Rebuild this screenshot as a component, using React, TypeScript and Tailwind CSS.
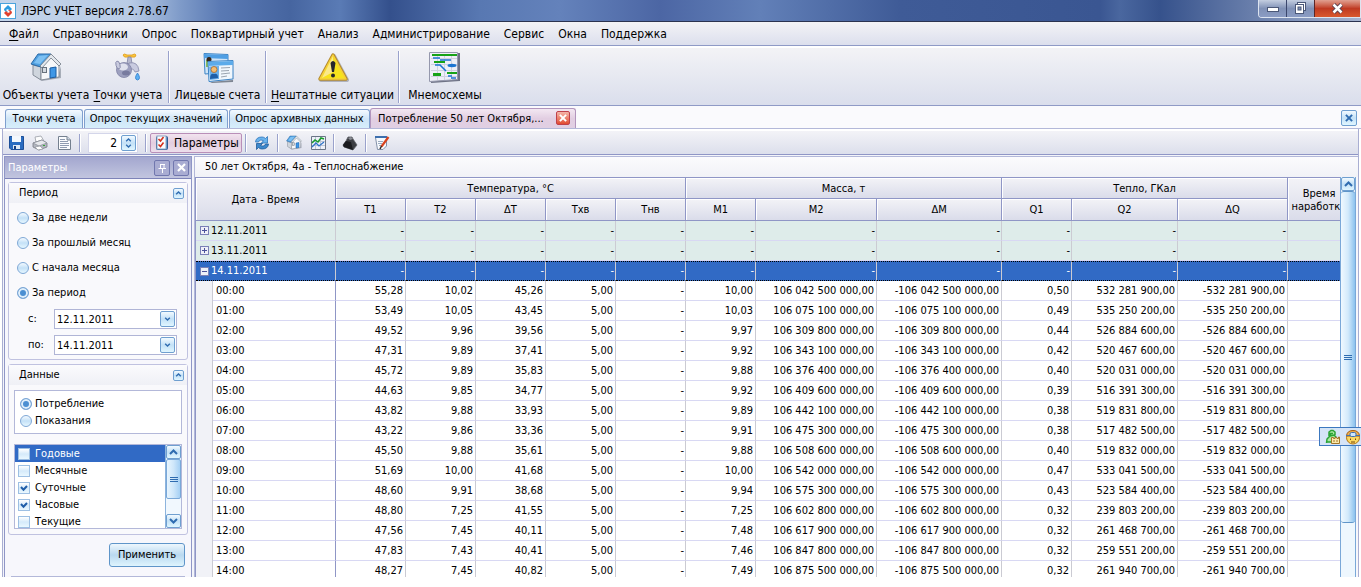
import React, { useState } from "react";

type Hour = [string, string, string, string, string, string, string, string];

const hours: Hour[] = [
  ["00:00", "55,28", "10,02", "45,26", "10,00", "106 042 500 000,00", "0,50", "532 281 900,00"],
  ["01:00", "53,49", "10,05", "43,45", "10,03", "106 075 100 000,00", "0,49", "535 250 200,00"],
  ["02:00", "49,52", "9,96", "39,56", "9,97", "106 309 800 000,00", "0,44", "526 884 600,00"],
  ["03:00", "47,31", "9,89", "37,41", "9,92", "106 343 100 000,00", "0,42", "520 467 600,00"],
  ["04:00", "45,72", "9,89", "35,83", "9,88", "106 376 400 000,00", "0,40", "520 031 000,00"],
  ["05:00", "44,63", "9,85", "34,77", "9,92", "106 409 600 000,00", "0,39", "516 391 300,00"],
  ["06:00", "43,82", "9,88", "33,93", "9,89", "106 442 100 000,00", "0,38", "519 831 800,00"],
  ["07:00", "43,22", "9,86", "33,36", "9,91", "106 475 300 000,00", "0,38", "517 482 500,00"],
  ["08:00", "45,50", "9,88", "35,61", "9,88", "106 508 600 000,00", "0,40", "519 832 000,00"],
  ["09:00", "51,69", "10,00", "41,68", "10,00", "106 542 000 000,00", "0,47", "533 041 500,00"],
  ["10:00", "48,60", "9,91", "38,68", "9,94", "106 575 300 000,00", "0,43", "523 584 400,00"],
  ["11:00", "48,80", "7,25", "41,55", "7,25", "106 602 800 000,00", "0,32", "239 803 200,00"],
  ["12:00", "47,56", "7,45", "40,11", "7,48", "106 617 900 000,00", "0,32", "261 468 700,00"],
  ["13:00", "47,83", "7,43", "40,41", "7,46", "106 847 800 000,00", "0,32", "259 551 200,00"],
  ["14:00", "48,27", "7,45", "40,82", "7,49", "106 875 500 000,00", "0,32", "261 940 700,00"],
];

const menu = ["Файл", "Справочники", "Опрос", "Поквартирный учет", "Анализ", "Администрирование", "Сервис", "Окна", "Поддержка"];

const BLUE_BTN = "border border-[#6f9fd0] rounded-[2px] bg-linear-to-b from-[#f2faff] via-[#c3e1f7] to-[#e0f6ff]";

function Chevron({ up = false, small = false }: { up?: boolean; small?: boolean }) {
  return (
    <svg width={small ? 7 : 9} height={small ? 4 : 6} viewBox="0 0 9 6" className={up ? "rotate-180" : ""} aria-hidden="true">
      <path d="M1 1 L4.500 4.500 L8 1" fill="none" stroke="#2f6cb0" strokeWidth="2" />
    </svg>
  );
}

function Cross({ color, size = 9 }: { color: string; size?: number }) {
  return (
    <svg width={size} height={size} viewBox="0 0 9 9" aria-hidden="true">
      <path d="M1 1 L8 8 M8 1 L1 8" stroke={color} strokeWidth="2.200" />
    </svg>
  );
}

function HouseIcon({ size }: { size: number }) {
  return (
    <svg width={size} height={size} viewBox="0 0 32 32" aria-hidden="true">
      <path d="M4 23 L12 29 L31 26 L31 14 L28 24 Z" fill="#7d8592" opacity=".6" />
      <path d="M3 13 L11 15 L11 28 L3 23 Z" fill="#cfd5dd" stroke="#858d99" />
      <path d="M11 14 L21 4 L29 12 V25 L11 28 Z" fill="#f7f8fa" stroke="#858d99" />
      <path d="M1 12 L8 2 L21 2 L11 15 Z" fill="#4f9fe0" stroke="#2a69a6" strokeLinejoin="round" />
      <path d="M4 11 L9 4 L18 3 L10 12 Z" fill="#7dc0f2" />
      <path d="M21 2 L31 12 L29 14 L21 6 L12 16 L10 14 Z" fill="#e3e7ec" stroke="#6f7884" strokeWidth=".8" />
      <path d="M20 16 L26 15 V25 L20 26 Z" fill="#3f97e6" stroke="#1b5ca2" />
      <rect x="12.500" y="15.500" width="4" height="5" fill="#d4dae1" stroke="#69727d" />
    </svg>
  );
}

function FaucetIcon() {
  return (
    <svg width="32" height="32" viewBox="0 0 32 32" aria-hidden="true">
      <path d="M11 3 Q12 1 15 3 H20 Q23 1 24 3 Q24 6 20 5 H15 Q12 6 11 3 Z" fill="#fbc63e" stroke="#dd9b1c" strokeWidth=".8" />
      <path d="M16 5 L19 5 L20 12 L15 12 Z" fill="#b7b9cf" stroke="#8184a3" strokeWidth=".8" />
      <path d="M17 11 Q26 9 27 19 L23 20 Q22 16 16 17 Z" fill="#c9cbe0" stroke="#8689aa" strokeWidth=".8" />
      <circle cx="12" cy="18" r="7.500" fill="#9da0bf" stroke="#7f82a4" strokeWidth=".8" />
      <ellipse cx="11" cy="15" rx="5" ry="3.500" fill="#dfe1ed" />
      <ellipse cx="14" cy="21" rx="4" ry="2.500" fill="#787b9f" />
      <ellipse cx="6" cy="13" rx="2" ry="4" fill="#c9cbdf" stroke="#7f82a4" strokeWidth=".8" transform="rotate(-15 6 13)" />
      <path d="M25.500 21 Q21.500 27 25.500 28 Q29.500 27 25.500 21 Z" fill="#5fb0f2" stroke="#2c7ccd" strokeWidth=".8" />
    </svg>
  );
}

function CardsIcon() {
  return (
    <svg width="32" height="32" viewBox="0 0 32 32" aria-hidden="true">
      <path d="M2 1.500 L26 2.500 V20 L3 22 Z" fill="#cfe4f7" stroke="#3c84c6" strokeLinejoin="round" />
      <path d="M2 2 L26 3 V7 L2 6 Z" fill="#4f9fe4" />
      <path d="M4 8 H9 V15 H4 Z" fill="#86bb5e" />
      <circle cx="7" cy="7.500" r="2.500" fill="#35261c" />
      <path d="M8 30 L31 28 L32 12 L31 30 L10 31 Z" fill="#7d8592" />
      <path d="M6 9.500 L31 8.500 V27 L7 29.500 Z" fill="#f1f7fd" stroke="#3c84c6" strokeLinejoin="round" />
      <path d="M6 10 L31 9 V13 L6 14 Z" fill="#5cabea" />
      <path d="M7 14.500 L17 14 V27 L8 28 Z" fill="#6bb0ea" />
      <circle cx="12" cy="17.500" r="3" fill="#f4bd72" stroke="#a9682a" strokeWidth=".8" />
      <path d="M8 27 Q8 21 12 22 Q16 21 16 26 Z" fill="#1f5fa8" />
      <path d="M19 16 L28 15.500 M19 19 L27 18.500 M19 22 L28 21 M19 25 L25 24" stroke="#9aa4b0" />
    </svg>
  );
}

function WarningIcon() {
  return (
    <svg width="32" height="32" viewBox="0 0 32 32" aria-hidden="true">
      <path d="M17 4 L30 28 H4 Z" fill="#7b7f8d" stroke="#7b7f8d" strokeWidth="4" strokeLinejoin="round" opacity=".5" />
      <path d="M16 3 L29 27 H3 Z" fill="#f7e21c" stroke="#b58a2c" strokeWidth="3.500" strokeLinejoin="round" />
      <path d="M16 3 L29 27 H3 Z" fill="#f7e21c" stroke="#f5cf3a" strokeWidth="1.500" strokeLinejoin="round" />
      <path d="M16 4 L16 20 L5 26 Z" fill="#fbe98a" />
      <path d="M13.500 11 Q16 7 18.500 11 L17 20 H15 Z" fill="#26262c" />
      <circle cx="16" cy="23.500" r="2" fill="#26262c" />
    </svg>
  );
}

function SchemeIcon() {
  return (
    <svg width="32" height="32" viewBox="0 0 32 32" aria-hidden="true">
      <path d="M2 1 L31 1 L31 29 L2 31 Z" fill="#6f7386" />
      <path d="M.5 .5 L28.500 .5 L28.500 27.500 L.5 29.500 Z" fill="#eeeff7" stroke="#9598ad" />
      <path d="M8.500 3 V28 M15.500 3 V28 M22.500 3 V28 M2 6.500 H28 M2 12.500 H28 M2 18.500 H28 M2 24.500 H28" stroke="#cfd1df" />
      <path d="M3 3 H28" stroke="#17a317" strokeWidth="2" />
      <path d="M5 10 H16 M18 21 H28" stroke="#17a317" strokeWidth="2" />
      <rect x="4" y="21" width="8" height="3" fill="#17a317" />
      <path d="M4 6 H11 M11 8 H22 M6 13 H11 L17 19 M19 24 H23 M22 26 H27" stroke="#1c74d2" strokeWidth="1.500" fill="none" />
      <ellipse cx="23" cy="13.500" rx="4.500" ry="1.700" fill="#1c74d2" />
    </svg>
  );
}

function SaveIcon() {
  return (
    <svg width="16" height="16" viewBox="0 0 16 16" aria-hidden="true">
      <path d="M1.500 1.500 H15.500 V14.500 H3 L1.500 13 Z" fill="#2a6cc0" stroke="#1d4f98" />
      <rect x="4" y="1" width="9" height="6" fill="#f4f8fd" />
      <rect x="5" y="10" width="7" height="4" fill="#dfe9f5" />
      <rect x="6" y="11" width="2" height="3" fill="#173f80" />
    </svg>
  );
}

function PrintIcon() {
  return (
    <svg width="16" height="16" viewBox="0 0 16 16" aria-hidden="true">
      <path d="M4 7 L3 2 L9 1 L12 6 Z" fill="#fdfdfd" stroke="#9a9ea6" strokeWidth=".8" />
      <path d="M1 8 L10 5 L15 8 V12 L7 15 L1 12 Z" fill="#b3b7c0" stroke="#767a83" strokeWidth=".8" />
      <path d="M1 8 L7 11 L15 8 L10 5 Z" fill="#e6e8ec" stroke="#8d919a" strokeWidth=".8" />
      <path d="M3 12 L8 11 L11 14 L6 15 Z" fill="#fff" stroke="#9a9ea6" strokeWidth=".8" />
      <rect x="11" y="10" width="2" height="1" fill="#37a637" />
    </svg>
  );
}

function PageIcon() {
  return (
    <svg width="16" height="16" viewBox="0 0 16 16" aria-hidden="true">
      <path d="M2.500 1.500 H11 L14.500 5 V14.500 H2.500 Z" fill="#fbfcfe" stroke="#74808f" />
      <path d="M11 1.500 V5 H14.500" fill="#cfd8e4" stroke="#74808f" />
      <path d="M4 6.500 H12 M4 8.500 H13 M4 10.500 H13 M4 12.500 H11 M4 4.500 H9" stroke="#8f9bb0" />
    </svg>
  );
}

function ChecklistIcon() {
  return (
    <svg width="16" height="16" viewBox="0 0 16 16" aria-hidden="true">
      <rect x="2.500" y="1.500" width="11" height="13" rx="1" fill="#4b84c4" stroke="#2c5a91" />
      <rect x="3" y="1" width="9" height="13" fill="#f8fbff" stroke="#8aa6c6" />
      <path d="M4.500 4 L6.500 6 L9.500 2 M4.500 9.500 L6.500 11.500 L9.500 7.500" stroke="#d4311d" strokeWidth="1.600" fill="none" />
    </svg>
  );
}

function RefreshIcon() {
  return (
    <svg width="16" height="16" viewBox="0 0 16 16" aria-hidden="true">
      <path d="M1.500 7 Q2 2 8 2 Q10 2 11.500 3.500 L13.500 1.500 V8 H7.500 L9.500 5.700 Q5.500 4 4.500 7 Z" fill="#6bb3ec" stroke="#2b74ba" strokeWidth=".8" />
      <path d="M14.500 9 Q14 14 8 14 Q6 14 4.500 12.500 L2.500 14.500 V8.500 H8.500 L6.500 10.500 Q10.500 12 11.500 9 Z" fill="#3c88cc" stroke="#1e5b9b" strokeWidth=".8" />
    </svg>
  );
}

function ChartIcon() {
  return (
    <svg width="16" height="16" viewBox="0 0 16 16" aria-hidden="true">
      <path d="M1.500 1.500 H15.500 V14.500 H1.500 Z" fill="#eef1f8" stroke="#6a7586" />
      <path d="M5.500 2 V14 M10.500 2 V14 M2 6.500 H15 M2 10.500 H15" stroke="#bcc5d5" />
      <path d="M2 8 L5 5 L8 7 L11 3 L14 4" stroke="#179c2c" strokeWidth="1.500" fill="none" />
      <path d="M2 12 L6 8 L9 11 L14 7" stroke="#2f74c8" strokeWidth="1.300" fill="none" />
    </svg>
  );
}

function WeightIcon() {
  return (
    <svg width="16" height="16" viewBox="0 0 16 16" aria-hidden="true">
      <path d="M4 6 L6 2 L10 2 L11 4 L15 10 L11 15 L2 12 L1 10 Z" fill="#3c3e43" stroke="#5c5f66" strokeWidth=".8" />
      <path d="M4 6 L9 7 L11 15 L2 12 L1 10 Z" fill="#1b1c20" />
      <path d="M6 3 L9 2 L11 4 L8 5 Z" fill="#8b8e95" />
    </svg>
  );
}

function NotepadIcon() {
  return (
    <svg width="16" height="16" viewBox="0 0 16 16" aria-hidden="true">
      <path d="M1.500 2.500 H12.500 V11 L9 14.500 H3.500 Z" fill="#f6f9fd" stroke="#8391a8" />
      <path d="M1 1 H13 V3 H1 Z" fill="#3c6fae" />
      <path d="M4 6.500 H9 M4 8.500 H8 M5 10.500 H8" stroke="#9cabc0" />
      <path d="M14.500 2 L7.500 11.500" stroke="#d8431f" strokeWidth="2.200" />
      <path d="M7.500 11 L6 14" stroke="#35261f" strokeWidth="1.500" />
    </svg>
  );
}

function BigButton({ icon, label, hot, width }: { icon: React.ReactNode; label: string; hot?: boolean; width: string }) {
  return (
    <button type="button" className={`flex h-full flex-col items-center gap-[3px] pt-1 whitespace-nowrap ${width}`}>
      {icon}
      <span className="text-[12px] leading-4">
        {hot ? <u className="underline-offset-2">{label[0]}</u> : label[0]}
        {label.slice(1)}
      </span>
    </button>
  );
}

function Sep({ tall = false }: { tall?: boolean }) {
  return <span className={`w-0.5 shrink-0 border-l border-[#9aa2cc] border-r border-r-white ${tall ? "mx-0.5 h-[52px]" : "mx-[3px] h-[18px]"}`} />;
}

function ToolBtn({ label, children }: { label: string; children: React.ReactNode }) {
  return (
    <button type="button" aria-label={label} className="flex size-6 shrink-0 items-center justify-center">
      {children}
    </button>
  );
}

function Radio({ name, label, checked, onChange }: { name: string; label: string; checked: boolean; onChange: () => void }) {
  return (
    <label className="flex items-center gap-[3px]">
      <input
        type="radio"
        name={name}
        checked={checked}
        onChange={onChange}
        className="size-3 appearance-none rounded-full border border-[#7fa8d6] bg-linear-to-b from-[#f4faff] via-[#c4e1f7] to-[#e6f7ff] checked:bg-none checked:bg-[#4b8fd2] checked:shadow-[inset_0_0_0_2px_#e0effb]"
      />
      {label}
    </label>
  );
}

function GroupBox({ title, children }: { title: string; children: React.ReactNode }) {
  return (
    <section className="rounded-[3px] border border-[#c0c2e0] bg-[#f9f9fc]">
      <header className="flex h-5 items-center justify-between bg-linear-to-b from-[#fbfbfd] to-[#eff0f6] pr-[3px] pl-2.5">
        <h2>{title}</h2>
        <button type="button" aria-label={`Свернуть: ${title}`} className={`flex size-[11px] items-center justify-center ${BLUE_BTN}`}>
          <Chevron up small />
        </button>
      </header>
      {children}
    </section>
  );
}

function DateField({ id, label, value }: { id: string; label: string; value: string }) {
  return (
    <div className="flex items-center">
      <label htmlFor={id} className="w-[26px]">{label}</label>
      <div className="flex h-5 w-[123px] items-center border border-[#b0b5d6] bg-white pr-px">
        <input id={id} defaultValue={value} className="h-full w-0 flex-1 bg-transparent pl-0.5 outline-none" />
        <button type="button" aria-label="Выбрать дату" className={`flex h-4 w-[15px] items-center justify-center ${BLUE_BTN}`}>
          <Chevron small />
        </button>
      </div>
    </div>
  );
}

function Sidebar() {
  const [period, setPeriod] = useState(3);
  const [mode, setMode] = useState(0);
  const [checks, setChecks] = useState([false, false, true, true, false]);
  return (
    <aside className="flex w-[188px] shrink-0 flex-col overflow-hidden border border-b-0 border-[#8f96c6] bg-[#f7f7fc]">
      <div className="flex h-[22px] shrink-0 items-center gap-[3px] border-b border-[#7d83b8] bg-linear-to-b from-[#a3a7cf] to-[#c2c5df] pr-0.5 pl-[3px] text-white">
        <h2 className="flex-1">Параметры</h2>
        <button type="button" aria-label="Закрепить" className="flex size-4 items-center justify-center rounded-[2px] border border-[#7177ae] bg-[#a9acd2]">
          <svg width="10" height="10" viewBox="0 0 10 10" aria-hidden="true">
            <path d="M3 1.500 H8 M3.500 1.500 V5 M7 1 V6 M1.500 5.500 H9 M5.500 6 V10" stroke="#fff" fill="none" />
          </svg>
        </button>
        <button type="button" aria-label="Закрыть панель" className="flex size-4 items-center justify-center rounded-[2px] border border-[#7177ae] bg-[#a9acd2]">
          <Cross color="#fff" size={9} />
        </button>
      </div>
      <div className="flex flex-col gap-1 px-[3px] pt-[3px]">
        <GroupBox title="Период">
          <div className="flex flex-col pl-2">
            {["За две недели", "За прошлый месяц", "С начала месяца", "За период"].map((t, i) => (
              <div key={t} className="flex h-[25px] items-center pt-1">
                <Radio name="period" label={t} checked={period === i} onChange={() => setPeriod(i)} />
              </div>
            ))}
          </div>
          <div className="flex flex-col gap-1.5 pt-1.5 pb-1 pl-[19px]">
            <DateField id="from" label="с:" value="12.11.2011" />
            <DateField id="to" label="по:" value="14.11.2011" />
          </div>
        </GroupBox>
        <GroupBox title="Данные">
          <div className="flex flex-col gap-2.5 px-[5px] py-[5px]">
            <div className="flex h-11 flex-col justify-center gap-px border border-[#b3b8d9] bg-white pl-[5px] leading-4">
              <Radio name="mode" label="Потребление" checked={mode === 0} onChange={() => setMode(0)} />
              <Radio name="mode" label="Показания" checked={mode === 1} onChange={() => setMode(1)} />
            </div>
            <div className="flex h-[85px] overflow-hidden border border-[#b3b8d9] bg-white">
              <div className="flex-1">
                {["Годовые", "Месячные", "Суточные", "Часовые", "Текущие"].map((t, i) => (
                  <label key={t} className={`flex h-[17px] items-center gap-[5px] pl-[3px] ${i === 0 ? "bg-[#316ac5] text-white" : ""}`}>
                    <span className="relative flex size-3">
                      <input
                        type="checkbox"
                        checked={checks[i]}
                        onChange={() => setChecks(checks.map((c, k) => (k === i ? !c : c)))}
                        className="size-3 appearance-none border border-[#9dbfe3] bg-linear-to-b from-white via-[#d5eafa] to-[#eaf8ff]"
                      />
                      {checks[i] && (
                        <svg className="pointer-events-none absolute inset-0" width="12" height="12" viewBox="0 0 12 12" aria-hidden="true">
                          <path d="M3 5 L5.500 7.800 L9 4" stroke="#1f5da8" strokeWidth="2" fill="none" />
                        </svg>
                      )}
                    </span>
                    {t}
                  </label>
                ))}
              </div>
              <div className="flex w-4 shrink-0 flex-col border-l border-[#8db4dd] bg-[#f1f8fe]">
                <span className={`flex h-[14px] items-center justify-center ${BLUE_BTN}`}><Chevron up /></span>
                <span className="flex h-10 flex-col items-center justify-center gap-px rounded-[2px] border border-[#7aa8d8] bg-linear-to-r from-[#e8f5fe] via-[#cfe7fa] to-[#a5d0f4]">
                  <i className="h-px w-2 bg-[#2f6cb0]" /><i className="h-px w-2 bg-[#2f6cb0]" /><i className="h-px w-2 bg-[#2f6cb0]" />
                </span>
                <span className="flex-1" />
                <span className={`flex h-[14px] items-center justify-center ${BLUE_BTN}`}><Chevron /></span>
              </div>
            </div>
          </div>
        </GroupBox>
      </div>
      <button type="button" className="mt-2 mr-1.5 h-6 w-[76px] shrink-0 self-end rounded-[3px] border border-[#5f95c9] bg-linear-to-b from-[#eef7fd] via-[#b9d9f0] to-[#dff4fd]">
        Применить
      </button>
      <div className="mx-1.5 mt-[9px] h-5 border border-[#b3b8d9]" />
    </aside>
  );
}

const TH = "border-r border-b border-[#8f96c6] bg-linear-to-b from-[#f3f3f7] to-[#dadcea] font-normal p-0 pt-px shadow-[inset_1px_1px_0_#fff]";
const TD = "border-r border-b border-r-[#cbcbd3] border-b-[#d8d8f3] p-0 text-right";
const TD_SELECTED = "border-y border-y-black [border-block-style:dotted] border-r border-r-[#cbcbd3] p-0 text-right";

function DataGrid() {
  return (
    <table className="w-full min-w-[1156px] table-fixed border-separate border-spacing-0 border-t border-l border-[#8f96c6]">
      <colgroup>
        <col className="w-[17px]" /><col className="w-[123px]" />
        <col className="w-[70px]" /><col className="w-[70px]" /><col className="w-[70px]" /><col className="w-[70px]" /><col className="w-[70px]" />
        <col className="w-[70px]" /><col className="w-[121px]" /><col className="w-[125px]" />
        <col className="w-[70px]" /><col className="w-[106px]" /><col className="w-[110px]" /><col />
      </colgroup>
      <thead>
        <tr className="h-[21px]">
          <th colSpan={2} rowSpan={2} className={TH}>Дата - Время</th>
          <th colSpan={5} className={TH}>Температура, °C</th>
          <th colSpan={3} className={TH}>Масса, т</th>
          <th colSpan={3} className={TH}>Тепло, ГКал</th>
          <th rowSpan={2} className={`leading-[13px] ${TH}`}>Время<br />наработки</th>
        </tr>
        <tr className="h-[22px]">
          {["T1", "T2", "ΔT", "Tхв", "Tнв", "M1", "M2", "ΔM", "Q1", "Q2", "ΔQ"].map((h) => (
            <th key={h} className={TH}>{h}</th>
          ))}
        </tr>
      </thead>
      <tbody>
        {["12.11.2011", "13.11.2011", "14.11.2011"].map((d, i) => {
          const sel = i === 2;
          const cell = sel ? TD_SELECTED : TD;
          return (
            <tr key={d} className={`h-5 ${sel ? "bg-[#316ac5] text-white" : "bg-[#deecea]"}`}>
              <td colSpan={2} className={cell}>
                <div className="flex items-center gap-0.5 pl-1">
                  <button
                    type="button"
                    aria-label={sel ? "Свернуть" : "Развернуть"}
                    className="flex size-[9px] items-center justify-center border border-[#7a80b6] bg-[#eef0f8]"
                  >
                    <svg width="7" height="7" viewBox="0 0 7 7" aria-hidden="true">
                      <path d={sel ? "M1 3.500 H6" : "M1 3.500 H6 M3.500 1 V6"} stroke="#4a519a" />
                    </svg>
                  </button>
                  {d}
                </div>
              </td>
              {Array.from({ length: 12 }, (_, k) => (
                <td key={k} className={`pr-px! ${cell}`}>{k < 11 ? "-" : ""}</td>
              ))}
            </tr>
          );
        })}
        {hours.map(([t, t1, t2, dt, m, m2, q1, q2]) => (
          <tr key={t} className="h-5 bg-white">
            <td className="border-r border-[#cbcbd3] bg-[#f1f2f7] p-0" />
            <td className="border-r border-b border-r-[#8f96c6] border-b-[#d8d8f3] p-0 pl-[3px]">{t}</td>
            {[t1, t2, dt, "5,00", "-", m, m2, "-" + m2, q1, q2, "-" + q2, ""].map((v, k) => (
              <td key={k} className={`whitespace-nowrap ${TD} ${v === "-" ? "pr-px!" : "pr-0.5!"}`}>{v}</td>
            ))}
          </tr>
        ))}
      </tbody>
    </table>
  );
}

const TAB = "h-[19px] rounded-t-[3px] border border-b-0 border-[#7f9fce] bg-linear-to-b from-[#f4faff] via-[#cfe5f7] to-[#d6eefb] text-center whitespace-nowrap";

export default function App() {
  return (
    <div className="relative flex h-screen flex-col overflow-hidden bg-white pb-2.5 font-['DejaVu_Sans_Condensed','DejaVu_Sans',sans-serif] text-[11px] leading-[14px] text-black">
      <header className="flex h-[22px] shrink-0 items-start border-b border-[#2b3350] bg-[linear-gradient(90deg,#c3d4ea_0,#b9cce6_130px,#7f9bc9_180px,#5a7ab4_220px,#4665a0_290px,#5a7bb5_340px,#34508c_390px,#5878b2_480px,#6482bb_560px,#4c66a4_660px,#6280b8_760px,#3f5b97_900px,#3a5692_1100px,#4a679f_1120px,#36528c_1160px,#a5b3d0_100%)]">
        <svg width="16" height="16" viewBox="0 0 16 16" className="mt-[3px]" aria-hidden="true">
          <rect x=".5" y=".5" width="15" height="15" fill="#fff" stroke="#4ba3dc" />
          <path d="M8 2 L12 6 L10 8 Q8 5 6 7 L8 9 Q4 9 4 6 Z" fill="#2c9be0" />
          <path d="M8 14 L4 10 L6 8 Q8 11 10 9 L8 7 Q12 7 12 10 Z" fill="#e0402e" />
        </svg>
        <h1 className="flex-1 pt-[3px] pl-[5px] text-[12px] leading-4">ЛЭРС УЧЕТ версия 2.78.67</h1>
        <div className="flex h-[18px] overflow-hidden rounded-bl-[4px] border border-t-0 border-[#dde4f0]">
          <button type="button" aria-label="Свернуть окно" className="flex w-7 items-center justify-center border-r border-[#3a466c] bg-linear-to-b from-[#c4cee0] via-[#8091b6] to-[#8b9cc4]">
            <span className="mt-0.5 h-[5px] w-3 border border-[#4b5878] bg-white" />
          </button>
          <button type="button" aria-label="Развернуть окно" className="flex w-7 items-center justify-center border-r border-[#5c2626] bg-linear-to-b from-[#c4cee0] via-[#8091b6] to-[#8b9cc4]">
            <svg width="13" height="13" viewBox="0 0 13 13" aria-hidden="true">
              <rect x="3.500" y=".5" width="8" height="8" fill="#fff" stroke="#4b5878" />
              <rect x="1.500" y="2.500" width="8" height="9" fill="#fff" stroke="#4b5878" />
              <rect x="4" y="5" width="3" height="3" fill="#8091b6" stroke="#4b5878" />
            </svg>
          </button>
          <button type="button" aria-label="Закрыть окно" className="flex w-[45px] items-center justify-center bg-linear-to-b from-[#e0a091] via-[#bf3a22] to-[#d9582e]">
            <svg width="13" height="11" viewBox="0 0 13 11" aria-hidden="true">
              <path d="M2.500 1.500 L10.500 9.500 M10.500 1.500 L2.500 9.500" stroke="#5b4250" strokeWidth="4.500" />
              <path d="M2.500 1.500 L10.500 9.500 M10.500 1.500 L2.500 9.500" stroke="#fff" strokeWidth="2.500" />
            </svg>
          </button>
        </div>
      </header>

      <nav className="flex h-6 shrink-0 items-center gap-[14px] border-b border-[#8f9ac6] bg-linear-to-b from-[#f3f3f6] to-[#dcdfed] pl-[9px] text-[12px] whitespace-nowrap">
        {menu.map((m, i) => (
          <a key={m} href="#">{i === 0 ? <><u className="underline-offset-2">Ф</u>айл</> : m}</a>
        ))}
      </nav>

      <div className="flex h-[60px] shrink-0 items-center border-t-2 border-b border-t-white border-b-[#8f9ac6] bg-linear-to-b from-[#f3f3f6] to-[#dadeec] pl-0.5">
        <BigButton icon={<HouseIcon size={32} />} label="Объекты учета" width="w-[88px]" />
        <BigButton icon={<FaucetIcon />} label="Точки учета" hot width="w-[76px]" />
        <Sep tall />
        <BigButton icon={<CardsIcon />} label="Лицевые счета" width="w-[91px]" />
        <Sep tall />
        <BigButton icon={<WarningIcon />} label="Нештатные ситуации" hot width="w-[127px]" />
        <Sep tall />
        <BigButton icon={<SchemeIcon />} label="Мнемосхемы" width="w-[86px]" />
      </div>

      <div className="flex h-[23px] shrink-0 items-end border-b border-[#b3b8d9] bg-[#fafafd] pr-1 pl-[5px]">
        <button type="button" className={`mr-px w-[78px] ${TAB}`}>Точки учета</button>
        <button type="button" className={`mr-px w-[144px] ${TAB}`}>Опрос текущих значений</button>
        <button type="button" className={`w-[141px] ${TAB}`}>Опрос архивных данных</button>
        <div className="flex h-5 w-[206px] items-center rounded-t-[3px] border border-b-0 border-[#b295bd] bg-linear-to-b from-[#f3e8f2] via-[#e2cee2] to-[#e0cfe3] pl-[7px]">
          <button type="button" className="flex-1 text-left whitespace-nowrap">Потребление 50 лет Октября,...</button>
          <button type="button" aria-label="Закрыть вкладку" className="mr-[5px] mb-0.5 flex size-[14px] items-center justify-center rounded-[2px] border border-[#c0404a] bg-linear-to-b from-[#f3b4a8] to-[#e0482f]">
            <Cross color="#fff" size={8} />
          </button>
        </div>
        <span className="flex-1" />
        <button type="button" aria-label="Закрыть" className={`mb-0.5 flex size-4 items-center justify-center ${BLUE_BTN}`}>
          <Cross color="#2f6cb0" size={8} />
        </button>
      </div>

      <div className="mx-0.5 flex min-h-0 flex-1 flex-col border-x border-[#a9aed2] bg-[#f4f5fa]">
        <div className="flex h-[26px] shrink-0 items-center border-t-2 border-b border-t-white border-b-[#8f96c6] bg-linear-to-b from-[#f3f3f7] to-[#dcdfec] pl-px">
          <ToolBtn label="Сохранить"><SaveIcon /></ToolBtn>
          <ToolBtn label="Печать"><PrintIcon /></ToolBtn>
          <ToolBtn label="Отчет"><PageIcon /></ToolBtn>
          <Sep />
          <div className="mx-1 flex h-5 w-[50px] shrink-0 items-center border border-[#d4d6ea] bg-white pr-px">
            <input aria-label="Знаков после запятой" defaultValue="2" className="h-full w-0 flex-1 bg-transparent pr-1 text-right text-[12px] outline-none" />
            <button type="button" aria-label="Изменить" className={`flex h-4 w-[15px] flex-col items-center justify-center gap-0.5 ${BLUE_BTN}`}>
              <Chevron up small />
              <Chevron small />
            </button>
          </div>
          <Sep />
          <button type="button" className="flex h-5 shrink-0 items-center gap-1 rounded-[2px] border border-[#b98fb8] bg-linear-to-b from-[#f2e4ef] via-[#e3cde0] to-[#eddfec] pr-0.5 pl-[3px] text-[12px] whitespace-nowrap">
            <ChecklistIcon />
            Параметры
          </button>
          <Sep />
          <ToolBtn label="Обновить"><RefreshIcon /></ToolBtn>
          <Sep />
          <ToolBtn label="Объект"><HouseIcon size={16} /></ToolBtn>
          <ToolBtn label="График"><ChartIcon /></ToolBtn>
          <Sep />
          <ToolBtn label="Вес"><WeightIcon /></ToolBtn>
          <Sep />
          <ToolBtn label="Изменить запись"><NotepadIcon /></ToolBtn>
        </div>

        <div className="flex min-h-0 flex-1 gap-0.5 pt-px pl-px">
          <Sidebar />
          <main className="flex min-w-0 flex-1 flex-col border-l border-[#b3b8d9] bg-[#f7f7fb]">
            <h2 className="h-[21px] shrink-0 border-t border-[#b3b8d9] bg-linear-to-b from-[#fbfbfd] to-[#f1f2f7] pt-[3px] pl-2.5">50 лет Октября, 4а - Теплоснабжение</h2>
            <div className="flex min-h-0 flex-1">
              <div className="min-w-0 flex-1 overflow-hidden">
                <DataGrid />
              </div>
              <div className="mr-0.5 flex w-4 shrink-0 flex-col border-x border-[#7aa8d8] bg-[#eef7fe]">
                <span className={`flex h-[14px] shrink-0 items-center justify-center ${BLUE_BTN}`}><Chevron up /></span>
                <span className="flex min-h-0 flex-[330_1_0%] flex-col items-center justify-center gap-px rounded-[3px] border-y border-[#5f95c9] bg-linear-to-r from-[#f0f9ff] via-[#d3eafb] to-[#8cc2ee]">
                  <i className="h-px w-2 bg-[#2f6cb0]" /><i className="h-px w-2 bg-[#2f6cb0]" /><i className="h-px w-2 bg-[#2f6cb0]" />
                </span>
                <span className="flex-[54_1_0%]" />
              </div>
            </div>
          </main>
        </div>
      </div>

      <div className="absolute top-[427px] right-0 flex h-[19px] w-[42px] items-center justify-between border border-r-0 border-[#3c78bf] bg-[#d5e4f7] pl-[5px]">
        <svg width="16" height="16" viewBox="0 0 16 16" aria-hidden="true">
          <path d="M4 7 L4 3 L6 1.500 H8 L10 3 V6 M6 7 L5 4.500 H8 M1.500 14 L2 10 L5 7 L9 6 L11 8 V13 H2" fill="#a9e8a2" stroke="#2ba336" strokeWidth="1.500" />
          <path d="M6.500 14.500 V8.500 H8.500 V9.500 H10 V8.500 H12 V9.500 H13.500 V8 H14.500 V14.500 Z" fill="#fbe9ab" stroke="#a2772a" />
          <path d="M9 11 V13 M12 11 V13" stroke="#a2772a" />
        </svg>
        <svg width="16" height="16" viewBox="0 0 16 16" aria-hidden="true">
          <circle cx="8" cy="8.500" r="6.500" fill="#fbd862" stroke="#b37415" />
          <path d="M1.500 7 Q2 1.500 8 1.500 Q14 1.500 14.500 7 Z" fill="#f5b04c" stroke="#a25d16" />
          <path d="M1 6.500 H15" stroke="#4a72a8" />
          <rect x="5" y="3.500" width="6" height="4" rx="1.500" fill="#cfe6fb" stroke="#3b71b5" />
          <path d="M5.500 9.500 V11 M10.500 9.500 V11 M6 13 H10" stroke="#744510" />
        </svg>
      </div>
    </div>
  );
}
